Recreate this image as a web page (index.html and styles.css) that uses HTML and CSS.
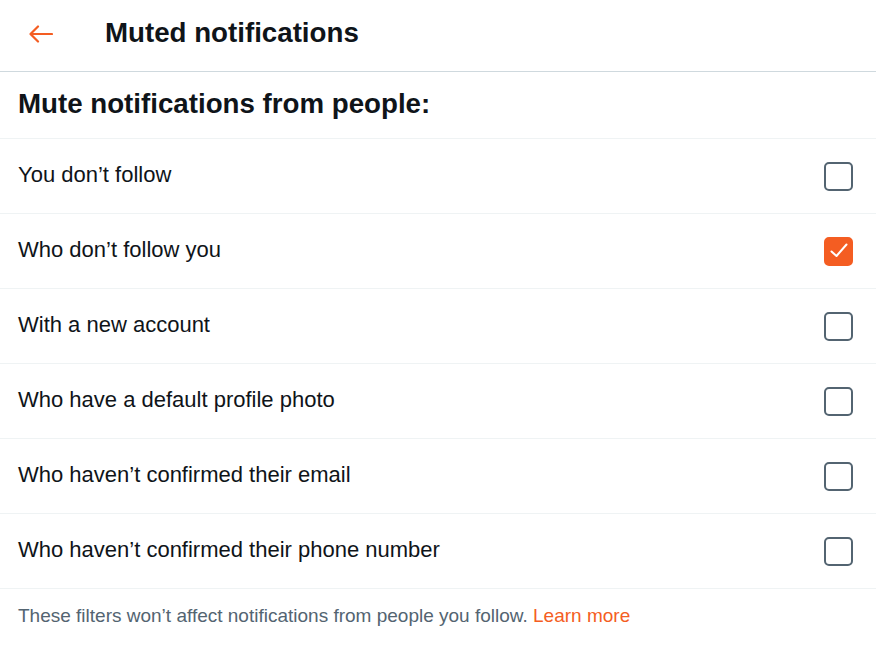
FILE: index.html
```
<!DOCTYPE html>
<html>
<head>
<meta charset="utf-8">
<link rel="stylesheet" href="styles.css">
</head>
<body>
<div class="page">
  <header class="topbar">
    <button class="back" aria-label="Back">
      <svg width="26" height="20" viewBox="0 0 26 20"><path d="M25 10H3.5M11 2.5L3.5 10L11 17.5" fill="none" stroke="currentColor" stroke-width="2.2" stroke-linecap="round" stroke-linejoin="round"/></svg>
    </button>
    <h1 class="title">Muted notifications</h1>
  </header>
  <h2 class="section-title">Mute notifications from people:</h2>
  <ul class="options">
    <li class="option"><span>You don’t follow</span><span class="box"></span></li>
    <li class="option"><span>Who don’t follow you</span><span class="box checked"><svg width="24" height="24" viewBox="0 0 24 24"><path d="M4.5 12.5L9.5 17L19.5 5.5" fill="none" stroke="#fff" stroke-width="2" stroke-linecap="round" stroke-linejoin="round"/></svg></span></li>
    <li class="option"><span>With a new account</span><span class="box"></span></li>
    <li class="option"><span>Who have a default profile photo</span><span class="box"></span></li>
    <li class="option"><span>Who haven’t confirmed their email</span><span class="box"></span></li>
    <li class="option"><span>Who haven’t confirmed their phone number</span><span class="box"></span></li>
  </ul>
  <p class="note">These filters won’t affect notifications from people you follow. <a href="#" class="link">Learn more</a></p>
</div>
</body>
</html>
```
FILE: styles.css
```
* { box-sizing: border-box; }
html, body { margin: 0; padding: 0; background: #fff; }
body { font-family: "Liberation Sans", Arial, sans-serif; color: #0f1419; }
.page { width: 876px; }
.topbar {
  height: 72px;
  display: flex;
  align-items: center;
  border-bottom: 1px solid #cfd9de;
  padding-left: 27px;
}
.back {
  border: 0; background: none; padding: 0; margin: 0;
  color: #f45d22;
  width: 26px; height: 20px;
  display: flex; align-items: center; justify-content: center;
  margin-top: -3px;
}
.title {
  margin: -6px 0 0 52px;
  font-size: 27.7px;
  font-weight: 700;
}
.section-title {
  margin: 0;
  height: 67px;
  padding: 0 18px 2px;
  display: flex;
  align-items: center;
  font-size: 27.7px;
  font-weight: 700;
  border-bottom: 1px solid #eff3f4;
}
.options { list-style: none; margin: 0; padding: 0; }
.option {
  height: 75px;
  display: flex;
  align-items: center;
  justify-content: space-between;
  padding: 0 23px 0 18px;
  font-size: 22px;
  border-bottom: 1px solid #eff3f4;
}
.option > span:first-child { margin-top: -2px; }
.box {
  width: 29px; height: 29px;
  border: 2px solid #536471;
  border-radius: 5px;
  display: flex; align-items: center; justify-content: center;
}
.box.checked { background: #f45d22; border-color: #f45d22; }
.note {
  margin: 0;
  padding: 16px 18px;
  font-size: 19px;
  color: #536471;
}
.link { color: #f45d22; text-decoration: none; }
```
